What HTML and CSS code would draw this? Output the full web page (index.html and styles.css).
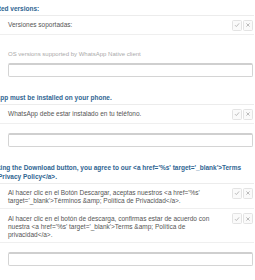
FILE: index.html
```html
<!DOCTYPE html>
<html>
<head>
<meta charset="utf-8">
<link rel="stylesheet" href="styles.css">
</head>
<body>
<div class="page">
  <section class="block">
    <h3 class="heading">Supported versions:</h3>
    <div class="rows">
      <div class="row">
        <div class="text">Versiones soportadas:</div>
        <div class="actions">
          <span class="btn"><svg viewBox="0 0 10 10"><polyline points="2.5,5.2 4.2,7 7.6,3"/></svg></span>
          <span class="btn"><svg viewBox="0 0 10 10"><path d="M3,3 L7,7 M7,3 L3,7"/></svg></span>
        </div>
      </div>
    </div>
    <div class="hint">OS versions supported by WhatsApp Native client</div>
    <div class="input"></div>
  </section>

  <section class="block">
    <h3 class="heading">WhatsApp must be installed on your phone.</h3>
    <div class="rows">
      <div class="row">
        <div class="text">WhatsApp debe estar instalado en tu teléfono.</div>
        <div class="actions">
          <span class="btn"><svg viewBox="0 0 10 10"><polyline points="2.5,5.2 4.2,7 7.6,3"/></svg></span>
          <span class="btn"><svg viewBox="0 0 10 10"><path d="M3,3 L7,7 M7,3 L3,7"/></svg></span>
        </div>
      </div>
    </div>
    <div class="input"></div>
  </section>

  <section class="block">
    <h3 class="heading">By clicking the Download button, you agree to our &lt;a href='%s' target='_blank'&gt;Terms &amp;amp; Privacy Policy&lt;/a&gt;.</h3>
    <div class="rows">
      <div class="row">
        <div class="text">Al hacer clic en el Botón Descargar, aceptas nuestros &lt;a href='%s' target='_blank'&gt;Términos &amp;amp; Política de Privacidad&lt;/a&gt;.</div>
        <div class="actions">
          <span class="btn"><svg viewBox="0 0 10 10"><polyline points="2.5,5.2 4.2,7 7.6,3"/></svg></span>
          <span class="btn"><svg viewBox="0 0 10 10"><path d="M3,3 L7,7 M7,3 L3,7"/></svg></span>
        </div>
      </div>
      <div class="row">
        <div class="text">Al hacer clic en el botón de descarga, confirmas estar de acuerdo con nuestra &lt;a href='%s' target='_blank'&gt;Terms &amp;amp; Política de privacidad&lt;/a&gt;.</div>
        <div class="actions">
          <span class="btn"><svg viewBox="0 0 10 10"><polyline points="2.5,5.2 4.2,7 7.6,3"/></svg></span>
          <span class="btn"><svg viewBox="0 0 10 10"><path d="M3,3 L7,7 M7,3 L3,7"/></svg></span>
        </div>
      </div>
    </div>
    <div class="input"></div>
  </section>
</div>
</body>
</html>
```

FILE: styles.css
```css
html, body {
  margin: 0;
  padding: 0;
  background: #ffffff;
}

body {
  font-family: "Liberation Sans", Arial, sans-serif;
  overflow: hidden;
}

.page {
  margin-left: -24px;
  width: 278px;
}

.block {
  padding-bottom: 12px;
}

.heading {
  margin: 3.5px 0 2px 0;
  font-size: 6.5px;
  line-height: 9px;
  font-weight: bold;
  color: #2f6592;
}

.rows {
  border-top: 1px solid #ececec;
}

.row {
  display: flex;
  align-items: flex-start;
  padding: 5.5px 1px 3px 32px;
  border-bottom: 1px solid #efefef;
}

.text {
  width: 214px;
  font-size: 6.5px;
  line-height: 8px;
  color: #555555;
}

.actions {
  margin-left: auto;
  margin-top: -1.5px;
  display: flex;
  gap: 1px;
}

.btn {
  width: 10px;
  height: 11px;
  box-sizing: border-box;
  border: 1px solid #e3e3e3;
  border-radius: 1.5px;
  background: #fafafa;
  display: flex;
  align-items: center;
  justify-content: center;
}

.btn svg {
  width: 8px;
  height: 8px;
  fill: none;
  stroke: #b8b8b8;
  stroke-width: 1.2;
}

.hint {
  margin: 16px 0 0 32px;
  font-size: 6px;
  line-height: 7px;
  color: #aaaaaa;
}

.input {
  margin: 5.5px 1px 0 32px;
  height: 14px;
  box-sizing: border-box;
  border: 1px solid #d4d4d4;
  border-top: 2px solid #cfcfcf;
  border-radius: 2px;
  background: #fff;
}

.rows + .input {
  margin-top: 9.5px;
}
```
